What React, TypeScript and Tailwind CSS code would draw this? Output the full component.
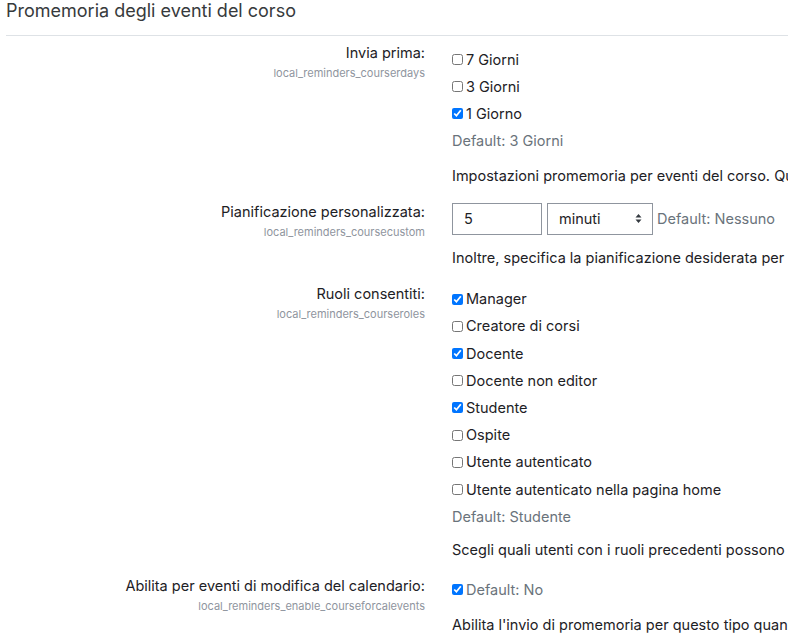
import React from 'react';

const Check = ({ label, checked }: { label: string; checked?: boolean }) => (
  <label className="flex items-center h-[27.2px] whitespace-nowrap">
    <input type="checkbox" defaultChecked={checked} className="m-0 mr-[3px] w-[11px] h-[11px] accent-[#0075ff]" />
    <span>{label}</span>
  </label>
);

const Label = ({ title, name }: { title: string; name: string }) => (
  <div className="text-right">
    <div className="leading-[22px] text-[#1d2125]">{title}</div>
    <div className="text-[11px] leading-[14px] text-[#8f959e] mt-[2px]">{name}</div>
  </div>
);

export default function App() {
  return (
    <div className="w-[788px] h-[644px] overflow-hidden bg-white text-[14.5px] text-[#1d2125]" style={{ fontFamily: 'Inter, "Noto Sans", sans-serif' }}>
      <h3 className="pl-[6px] text-[18px] leading-[22px] text-[#373a3c]">Promemoria degli eventi del corso</h3>
      <div className="ml-[6px] mt-[13px] border-t border-[#dee2e6]" />

      {/* Invia prima */}
      <div className="grid grid-cols-[425px_1fr] gap-x-[27px] mt-[6px]">
        <Label title="Invia prima:" name="local_reminders_courserdays" />
        <div className="pt-[4px]">
          <Check label="7 Giorni" />
          <Check label="3 Giorni" />
          <Check label="1 Giorno" checked />
          <div className="h-[27px] flex items-center text-[#6a737b]">Default: 3 Giorni</div>
          <div className="mt-[10px] leading-[22px] whitespace-nowrap">Impostazioni promemoria per eventi del corso. Queste impostazioni si applicano a tutti i corsi.</div>
        </div>
      </div>

      {/* Pianificazione personalizzata */}
      <div className="grid grid-cols-[425px_1fr] gap-x-[27px] mt-[14px]">
        <Label title="Pianificazione personalizzata:" name="local_reminders_coursecustom" />
        <div className="pt-[2px]">
          <div className="flex items-center whitespace-nowrap">
            <div className="w-[90px] h-[32px] border border-[#8f959e] px-[11px] flex items-center">5</div>
            <div className="ml-[5px] w-[106px] h-[32px] border border-[#8f959e] pl-[11px] pr-[10px] flex items-center justify-between">
              <span>minuti</span>
              <svg width="7" height="11" viewBox="0 0 7 11"><path d="M3.5 1 L6.5 4.5 H0.5 Z M3.5 10 L6.5 6.5 H0.5 Z" fill="#343a40" /></svg>
            </div>
            <span className="ml-[4px] text-[#6a737b]">Default: Nessuno</span>
          </div>
          <div className="mt-[12px] leading-[22px] whitespace-nowrap">Inoltre, specifica la pianificazione desiderata per inviare i promemoria.</div>
        </div>
      </div>

      {/* Ruoli consentiti */}
      <div className="grid grid-cols-[425px_1fr] gap-x-[27px] mt-[14px]">
        <Label title="Ruoli consentiti:" name="local_reminders_courseroles" />
        <div className="pt-[3px]">
          <Check label="Manager" checked />
          <Check label="Creatore di corsi" />
          <Check label="Docente" checked />
          <Check label="Docente non editor" />
          <Check label="Studente" checked />
          <Check label="Ospite" />
          <Check label="Utente autenticato" />
          <Check label="Utente autenticato nella pagina home" />
          <div className="h-[27px] flex items-center text-[#6a737b]">Default: Studente</div>
          <div className="mt-[9px] leading-[22px] whitespace-nowrap">Scegli quali utenti con i ruoli precedenti possono ricevere i promemoria.</div>
        </div>
      </div>

      {/* Abilita per eventi */}
      <div className="grid grid-cols-[425px_1fr] gap-x-[27px] mt-[14px]">
        <Label title="Abilita per eventi di modifica del calendario:" name="local_reminders_enable_courseforcalevents" />
        <div className="pt-[1px]">
          <label className="flex items-center h-[27px] whitespace-nowrap">
            <input type="checkbox" defaultChecked className="m-0 mr-[3px] w-[11px] h-[11px] accent-[#0075ff]" />
            <span className="text-[#6a737b]">Default: No</span>
          </label>
          <div className="mt-[11px] leading-[22px] whitespace-nowrap">Abilita l'invio di promemoria per questo tipo quando gli eventi del calendario vengono modificati.</div>
        </div>
      </div>
    </div>
  );
}
